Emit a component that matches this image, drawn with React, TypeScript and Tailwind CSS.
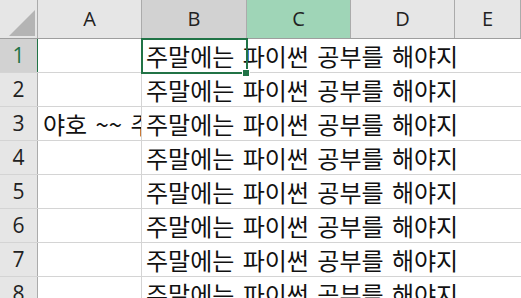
import React from 'react';

const ROWS = [1, 2, 3, 4, 5, 6, 7, 8];
const TEXT = '주말에는 파이썬 공부를 해야지';

const korean = { fontFamily: '"Noto Sans CJK KR", "Noto Sans", sans-serif' };
const ui = { fontFamily: '"Open Sans", "Liberation Sans", sans-serif' };

const ColHeader = ({ label, width, tone }: { label: string; width: string; tone?: 'sel' | 'green' }) => (
    <div
        className={`${width} h-full flex items-center justify-center border-r border-[#ababab] text-[20px] text-[#222] ${
            tone === 'sel' ? 'bg-[#d2d2d2]' : tone === 'green' ? 'bg-[#9fd5b7]' : 'bg-[#e6e6e6]'
        }`}
        style={ui}
    >
        {label}
    </div>
);

const Row = ({ n }: { n: number }) => {
    const active = n === 1;
    return (
        <div className="flex h-[34px] border-b border-[#d4d4d4]">
            <div
                className={`w-[38px] shrink-0 flex items-center justify-center text-[21px] border-r ${
                    active ? 'bg-[#d2d2d2] text-[#217346] border-[#217346]' : 'bg-[#e6e6e6] text-[#222] border-[#ababab]'
                }`}
                style={ui}
            >
                {n}
            </div>
            <div className="w-[104px] shrink-0 border-r border-[#d4d4d4] overflow-hidden whitespace-nowrap flex items-center pl-[5px] text-[24px] leading-none [word-spacing:3px] text-[#111]" style={korean}>
                {n === 3 ? '야호 ~~ 주말' : ''}
            </div>
            <div className="flex-1 flex items-center pl-[4px] whitespace-nowrap text-[24px] leading-none [word-spacing:3px] text-[#111]" style={korean}>
                {TEXT}
            </div>
        </div>
    );
};

export default function App() {
    return (
        <div className="relative w-[521px] h-[298px] overflow-hidden bg-white">
            {/* column headers */}
            <div className="flex h-[39px] border-b border-[#9e9e9e] bg-[#e6e6e6]">
                <div className="w-[38px] shrink-0 h-full border-r border-[#ababab] relative">
                    <div
                        className="absolute left-[9px] top-[10px] w-[26px] h-[26px] bg-[#b4b4b4]"
                        style={{ clipPath: 'polygon(100% 0, 100% 100%, 0 100%)' }}
                    />
                </div>
                <ColHeader label="A" width="w-[104px] shrink-0" />
                <ColHeader label="B" width="w-[105px] shrink-0" tone="sel" />
                <ColHeader label="C" width="w-[104px] shrink-0" tone="green" />
                <ColHeader label="D" width="w-[104px] shrink-0" />
                <ColHeader label="E" width="flex-1" />
            </div>

            {ROWS.map(n => (
                <Row key={n} n={n} />
            ))}

            {/* active cell B1 */}
            <div className="absolute left-[141px] top-[38px] w-[107px] h-[36px] border-2 border-[#217346] pointer-events-none" />
            <div className="absolute left-[242px] top-[69px] w-[8px] h-[8px] bg-[#217346] border border-white" />
        </div>
    );
}
